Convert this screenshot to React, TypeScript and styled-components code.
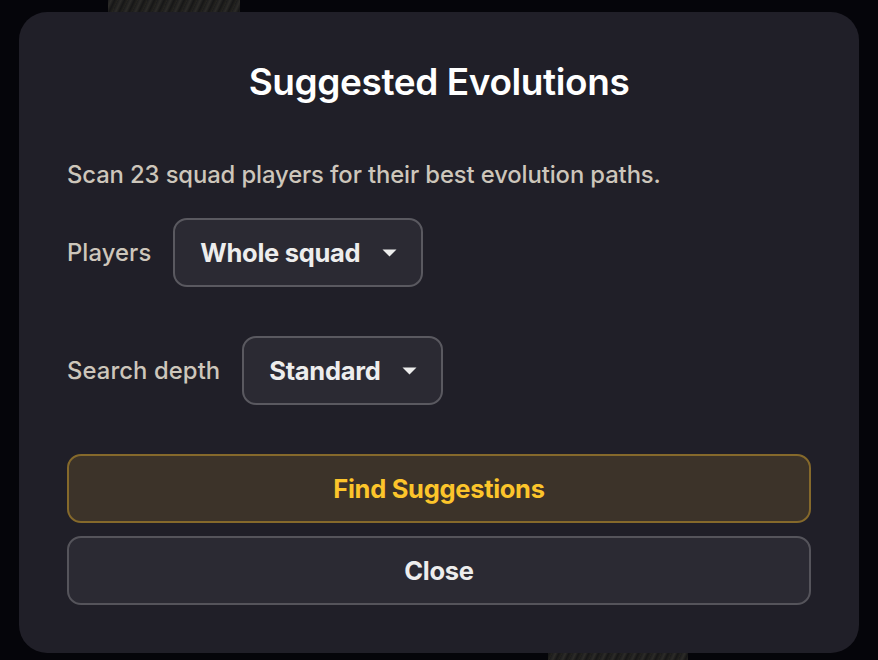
import styled, { createGlobalStyle } from "styled-components";

const GlobalStyle = createGlobalStyle`
  html, body {
    margin: 0;
    padding: 0;
    background: #05050a;
    font-family: Inter, "Noto Sans", sans-serif;
  }
  * { box-sizing: border-box; }
`;

const Page = styled.div`
  position: relative;
  width: 878px;
  height: 660px;
  overflow: hidden;
  background: #05050a;
`;

const BackdropRow = styled.div<{ align: "start" | "end" }>`
  display: flex;
  height: 330px;
  align-items: ${p => (p.align === "start" ? "flex-start" : "flex-end")};
  padding-left: ${p => (p.align === "start" ? "108px" : "548px")};
`;

const Thumb = styled.div<{ w: number }>`
  width: ${p => p.w}px;
  height: 40px;
  background: repeating-linear-gradient(
    115deg,
    #1c1c1d 0px,
    #2c2b28 3px,
    #161617 6px,
    #25241f 9px
  );
`;

const Overlay = styled.div`
  position: absolute;
  inset: 0;
  display: flex;
  justify-content: center;
  padding-top: 12px;
`;

const Dialog = styled.div`
  width: 840px;
  height: 641px;
  background: #201f28;
  border-radius: 28px;
  padding: 48px;
  display: flex;
  flex-direction: column;
`;

const Title = styled.h2`
  margin: 0 0 56px;
  text-align: center;
  color: #ffffff;
  font-size: 37px;
  line-height: 44px;
  font-weight: 600;
  letter-spacing: -0.4px;
`;

const Description = styled.p`
  margin: 0 0 28px;
  color: #cdc6bb;
  font-size: 23.8px;
  line-height: 30px;
  font-weight: 500;
  letter-spacing: -0.1px;
`;

const FieldRow = styled.div`
  display: flex;
  align-items: center;
  gap: 22px;
  margin-bottom: 49px;
`;

const Label = styled.span`
  color: #cdc6bb;
  font-size: 23.8px;
  font-weight: 500;
  letter-spacing: 0.1px;
`;

const Select = styled.button`
  display: flex;
  align-items: center;
  gap: 22px;
  height: 69px;
  padding: 0 24px 0 25px;
  background: #2b2a33;
  border: 2px solid #5a5960;
  border-radius: 14px;
  color: #ededed;
  font-family: inherit;
  font-size: 25.5px;
  font-weight: 700;
  letter-spacing: -0.3px;
  cursor: pointer;
`;

const Actions = styled.div`
  display: flex;
  flex-direction: column;
  gap: 13px;
`;

const ActionButton = styled.button<{ primary?: boolean }>`
  height: 69px;
  width: 100%;
  border-radius: 14px;
  border: 2px solid ${p => (p.primary ? "#85692b" : "#55545b")};
  background: ${p => (p.primary ? "#3c3329" : "#2b2a33")};
  color: ${p => (p.primary ? "#fcc52b" : "#ededed")};
  font-family: inherit;
  font-size: 25.5px;
  font-weight: 700;
  letter-spacing: -0.3px;
  cursor: pointer;
`;

function Caret() {
  return (
    <svg width="15" height="8" viewBox="0 0 15 8">
      <path d="M0.5 0.5h14L7.5 7.5z" fill="#ededed" />
    </svg>
  );
}

export default function App() {
  return (
    <>
      <GlobalStyle />
      <Page>
        <BackdropRow align="start">
          <Thumb w={132} />
        </BackdropRow>
        <BackdropRow align="end">
          <Thumb w={140} />
        </BackdropRow>
        <Overlay>
          <Dialog>
            <Title>Suggested Evolutions</Title>
            <Description>Scan 23 squad players for their best evolution paths.</Description>
            <FieldRow>
              <Label>Players</Label>
              <Select>
                Whole squad
                <Caret />
              </Select>
            </FieldRow>
            <FieldRow>
              <Label>Search depth</Label>
              <Select>
                Standard
                <Caret />
              </Select>
            </FieldRow>
            <Actions>
              <ActionButton primary>Find Suggestions</ActionButton>
              <ActionButton>Close</ActionButton>
            </Actions>
          </Dialog>
        </Overlay>
      </Page>
    </>
  );
}
